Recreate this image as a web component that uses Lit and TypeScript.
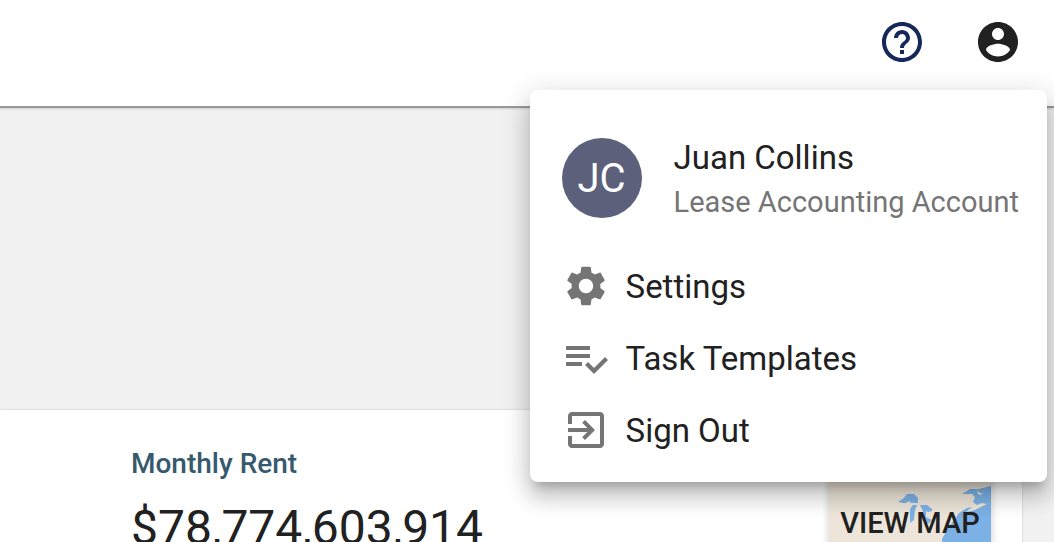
import { LitElement, html, css, svg } from "lit";
import { customElement } from "lit/decorators.js";

const icon = (d: string) => html`<svg class="icon" viewBox="0 0 24 24" aria-hidden="true">${svg`<path d=${d}></path>`}</svg>`;

const HELP =
  "M11 18h2v-2h-2v2zm1-16C6.48 2 2 6.48 2 12s4.48 10 10 10 10-4.48 10-10S17.52 2 12 2zm0 18c-4.41 0-8-3.59-8-8s3.59-8 8-8 8 3.59 8 8-3.59 8-8 8zm0-14c-2.21 0-4 1.79-4 4h2c0-1.1.9-2 2-2s2 .9 2 2c0 2-3 1.75-3 5h2c0-2.25 3-2.5 3-5 0-2.21-1.79-4-4-4z";
const ACCOUNT =
  "M12 2C6.48 2 2 6.48 2 12s4.48 10 10 10 10-4.48 10-10S17.52 2 12 2zm0 3c1.66 0 3 1.34 3 3s-1.34 3-3 3-3-1.34-3-3 1.34-3 3-3zm0 14.2c-2.5 0-4.71-1.28-6-3.22.03-1.99 4-3.08 6-3.08 1.99 0 5.97 1.09 6 3.08-1.29 1.94-3.5 3.22-6 3.22z";
const SETTINGS =
  "M19.14 12.94c.04-.3.06-.61.06-.94 0-.32-.02-.64-.07-.94l2.03-1.58c.18-.14.23-.41.12-.61l-1.92-3.32c-.12-.22-.37-.29-.59-.22l-2.39.96c-.5-.38-1.03-.7-1.62-.94l-.36-2.54c-.04-.24-.24-.41-.48-.41h-3.84c-.24 0-.43.17-.47.41l-.36 2.54c-.59.24-1.13.57-1.62.94l-2.39-.96c-.22-.08-.47 0-.59.22L2.74 8.87c-.12.21-.08.47.12.61l2.03 1.58c-.05.3-.09.63-.09.94s.02.64.07.94l-2.03 1.58c-.18.14-.23.41-.12.61l1.92 3.32c.12.22.37.29.59.22l2.39-.96c.5.38 1.03.7 1.62.94l.36 2.54c.05.24.24.41.48.41h3.84c.24 0 .44-.17.47-.41l.36-2.54c.59-.24 1.13-.56 1.62-.94l2.39.96c.22.08.47 0 .59-.22l1.92-3.32c.12-.22.07-.47-.12-.61l-2.01-1.58zM12 15.6c-1.98 0-3.6-1.62-3.6-3.6s1.62-3.6 3.6-3.6 3.6 1.62 3.6 3.6-1.62 3.6-3.6 3.6z";
const TASKS =
  "M14 10H2v2h12v-2zm0-4H2v2h12V6zM2 16h8v-2H2v2zm19.5-4.5L23 13l-6.99 7-4.51-4.5L13 14l3.01 3 5.49-5.5z";
const SIGN_OUT =
  "M10.09 15.59L11.5 17l5-5-5-5-1.41 1.41L12.67 11H3v2h9.67l-2.58 2.59zM19 3H5c-1.11 0-2 .9-2 2v4h2V5h14v14H5v-4H3v4c0 1.1.89 2 2 2h14c1.1 0 2-.9 2-2V5c0-1.1-.9-2-2-2z";

const MENU = [
  { label: "Settings", path: SETTINGS },
  { label: "Task Templates", path: TASKS },
  { label: "Sign Out", path: SIGN_OUT },
];

@customElement("account-menu")
export class AccountMenu extends LitElement {
  static styles = css`
    :host {
      display: block;
      padding: 48px 0 16px;
      border-radius: 8px;
      background: #fff;
      color: #212121;
      box-shadow: 0 10px 10px -6px rgba(0, 0, 0, 0.2), 0 16px 20px 2px rgba(0, 0, 0, 0.14),
        0 6px 28px 4px rgba(0, 0, 0, 0.12);
    }
    .profile {
      display: flex;
      align-items: flex-start;
      gap: 32px;
      padding: 0 28px 24px 32px;
    }
    .avatar {
      display: grid;
      place-items: center;
      flex: none;
      width: 80px;
      height: 80px;
      border-radius: 50%;
      background: #5c607b;
      color: #fff;
      font-size: 40px;
    }
    .name {
      font-size: 33px;
      line-height: 40px;
    }
    .role {
      font-size: 29px;
      line-height: 48px;
      color: #757575;
      white-space: nowrap;
    }
    .item {
      display: flex;
      align-items: center;
      gap: 16px;
      width: 100%;
      height: 72px;
      padding: 0 32px;
      border: 0;
      background: none;
      color: inherit;
      font: inherit;
      font-size: 33px;
      text-align: left;
      cursor: pointer;
    }
    .icon {
      flex: none;
      width: 48px;
      height: 48px;
      fill: #757575;
    }
  `;
  render() {
    return html`
      <div class="profile">
        <div class="avatar">JC</div>
        <div>
          <div class="name">Juan Collins</div>
          <div class="role">Lease Accounting Account</div>
        </div>
      </div>
      <nav>${MENU.map((m) => html`<button class="item" type="button">${icon(m.path)}<span>${m.label}</span></button>`)}</nav>
    `;
  }
}

@customElement("app-root")
export class AppRoot extends LitElement {
  static styles = css`
    :host {
      display: flex;
      flex-direction: column;
      position: relative;
      height: 100vh;
      overflow: hidden;
      background: #f1f1f1;
      color: #212121;
      font-family: Roboto, "Liberation Sans", sans-serif;
    }
    .bar {
      display: flex;
      flex: none;
      justify-content: flex-end;
      gap: 48px;
      padding: 18px 32px 40px;
      background: #fff;
      border-bottom: 2px solid #999;
      box-shadow: 0 1px 2px rgba(0, 0, 0, 0.15);
    }
    .tool {
      display: block;
      padding: 0;
      border: 0;
      background: none;
      cursor: pointer;
    }
    .icon {
      display: block;
      width: 48px;
      height: 48px;
      fill: #212121;
    }
    .help .icon {
      fill: #14285a;
    }
    .page {
      padding: 302px 32px 0 0;
    }
    .card {
      display: flex;
      justify-content: space-between;
      padding: 32px 31px 32px 131px;
      background: #fff;
      box-shadow: 0 0 2px rgba(0, 0, 0, 0.2);
    }
    .label {
      margin: 0;
      font-size: 28px;
      font-weight: 500;
      line-height: 44px;
      color: #37596d;
    }
    .amount {
      margin: 0;
      font-size: 48px;
      line-height: 84px;
    }
    .map {
      display: grid;
      place-items: center;
      width: 162px;
      height: 162px;
      padding: 0;
      border: 0;
      background: #ede5d9;
      box-shadow: 0 2px 8px rgba(0, 0, 0, 0.2);
      color: #212121;
      font: inherit;
      font-size: 29px;
      font-weight: 500;
      white-space: nowrap;
      cursor: pointer;
    }
    .map > * {
      grid-area: 1 / 1;
    }
    .water {
      width: 162px;
      height: 162px;
      fill: #7cb1e5;
    }
    .menu {
      position: absolute;
      top: 90px;
      right: 7px;
    }
  `;
  render() {
    return html`
      <header class="bar">
        <button class="tool help" type="button" aria-label="Help">${icon(HELP)}</button>
        <button class="tool" type="button" aria-label="Account">${icon(ACCOUNT)}</button>
      </header>
      <main class="page">
        <section class="card">
          <div>
            <h2 class="label">Monthly Rent</h2>
            <p class="amount">$78,774,603,914</p>
          </div>
          <button class="map" type="button">
            <svg class="water" viewBox="0 0 162 162" aria-hidden="true">
              <path d="M69 60L75 56L78 52H85L89 56V61H82L80 59L77 61H74Z"></path>
              <path d="M88 63L86 68L85 78L81 81V67L84 63Z"></path>
              <path d="M91 63H98L103 67V69L99 70L97 69V75L103 78L99 82L95 80V71Z"></path>
              <path d="M133 52L141 47H150L162 44V60L158 62L153 61L148 63L144 60L146 55L143 52Z"></path>
              <path d="M113 162V97L118 88L124 79L130 71L138 66L143 65L137 70L146 68L154 64L162 60V162Z"></path>
              <path fill="#ede5d9" d="M148 48L151 51H154L151 53L149 52Z"></path>
            </svg>
            <span>VIEW MAP</span>
          </button>
        </section>
      </main>
      <account-menu class="menu"></account-menu>
    `;
  }
}
